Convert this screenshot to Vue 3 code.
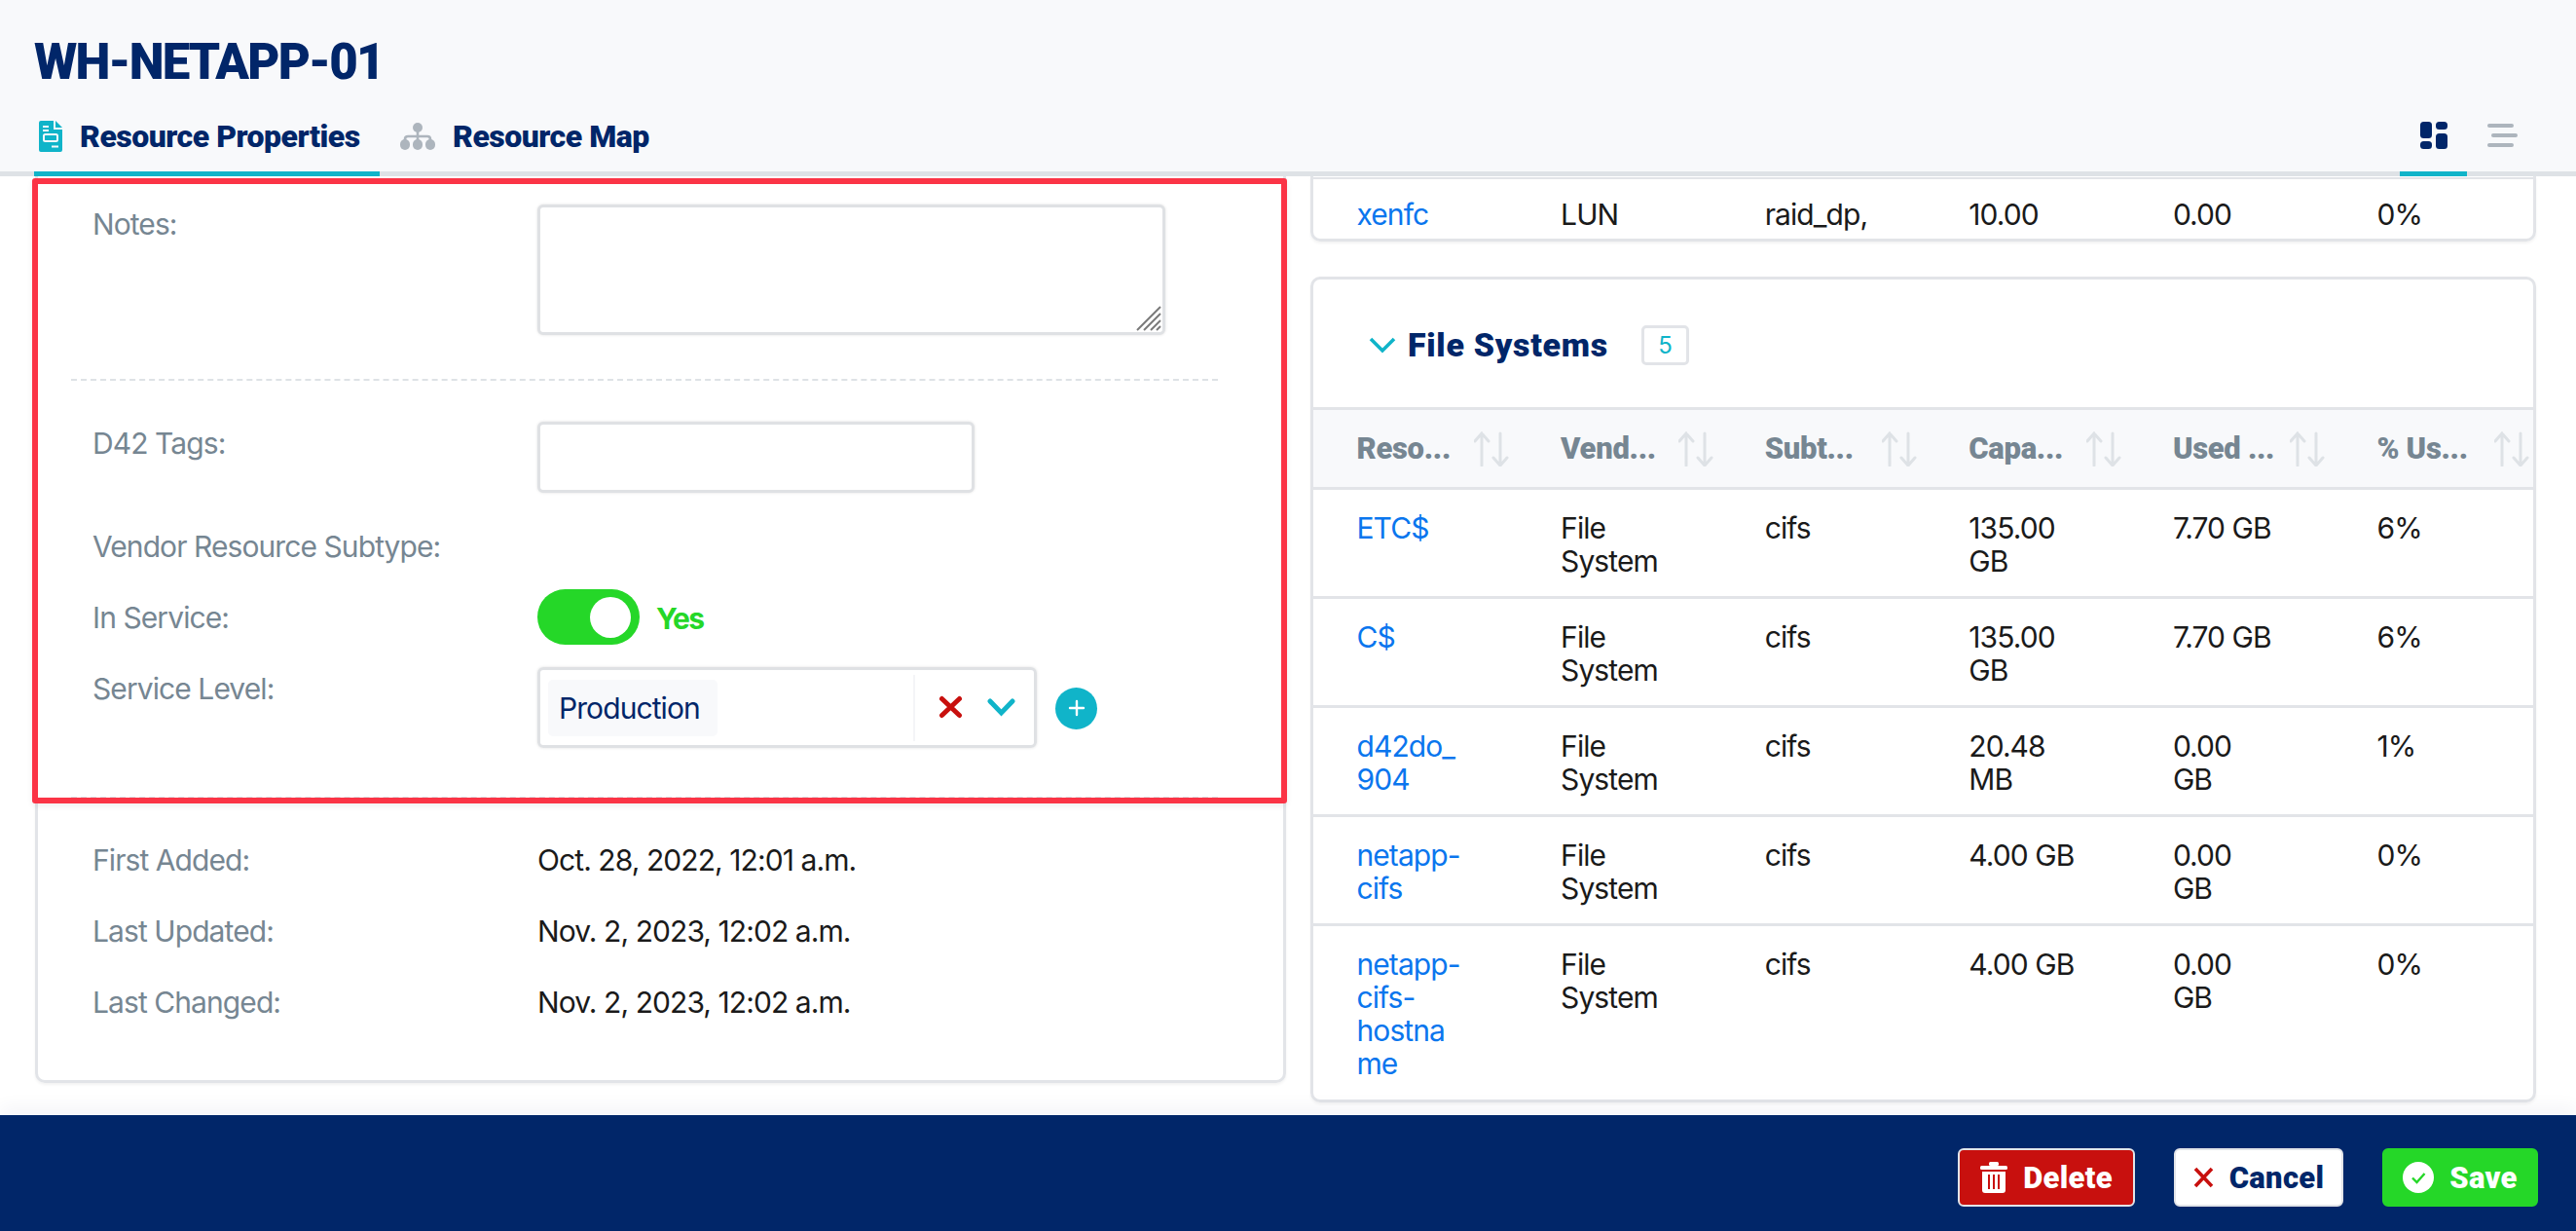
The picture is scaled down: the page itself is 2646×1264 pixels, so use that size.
<script setup>
const columnHeads = ['Reso...', 'Vend...', 'Subt...', 'Capa...', 'Used ...', '% Us...']
const rows = [
  { name: 'ETC$', vendor: 'File\nSystem', sub: 'cifs', cap: '135.00\nGB', used: '7.70 GB', pct: '6%' },
  { name: 'C$', vendor: 'File\nSystem', sub: 'cifs', cap: '135.00\nGB', used: '7.70 GB', pct: '6%' },
  { name: 'd42do_\n904', vendor: 'File\nSystem', sub: 'cifs', cap: '20.48\nMB', used: '0.00\nGB', pct: '1%' },
  { name: 'netapp-\ncifs', vendor: 'File\nSystem', sub: 'cifs', cap: '4.00 GB', used: '0.00\nGB', pct: '0%' },
  { name: 'netapp-\ncifs-\nhostna\nme', vendor: 'File\nSystem', sub: 'cifs', cap: '4.00 GB', used: '0.00\nGB', pct: '0%' }
]
const dates = [
  { label: 'First Added:', value: 'Oct. 28, 2022, 12:01 a.m.' },
  { label: 'Last Updated:', value: 'Nov. 2, 2023, 12:02 a.m.' },
  { label: 'Last Changed:', value: 'Nov. 2, 2023, 12:02 a.m.' }
]
</script>

<template>
  <div class="page">
    <header class="top">
      <h1 class="title">WH-NETAPP-01</h1>
      <nav class="tabs">
        <a class="tab active">
          <svg class="tab-icon doc" viewBox="0 0 24 32"><path d="M2 0h13v9h9v21a2 2 0 0 1-2 2H2a2 2 0 0 1-2-2V2a2 2 0 0 1 2-2z" fill="#10b4c9"/><path d="M17 0l7 7h-7z" fill="#10b4c9"/><path d="M4 6h6M4 10h6M13 26.500h7" stroke="#f8f9fb" stroke-width="2"/><rect x="5" y="14" width="14" height="7" rx="1.5" fill="none" stroke="#f8f9fb" stroke-width="2"/></svg>
          <span>Resource Properties</span>
        </a>
        <a class="tab">
          <svg class="tab-icon map" viewBox="0 0 36 28"><g fill="#adb5bd"><circle cx="18" cy="5" r="5"/><rect x="0" y="17" width="10" height="11" rx="5"/><rect x="13" y="17" width="10" height="11" rx="5"/><rect x="26" y="17" width="10" height="11" rx="5"/></g><path d="M18 9v9M5 18v-1q0-3 3-3h20q3 0 3 3v1" fill="none" stroke="#adb5bd" stroke-width="2.6"/></svg>
          <span>Resource Map</span>
        </a>
        <div class="views">
          <a class="view active">
            <svg width="28" height="28" viewBox="0 0 28 28" fill="#012669"><rect x="0" y="0" width="12" height="17" rx="3.5"/><rect x="0" y="20" width="12" height="8" rx="3.5"/><rect x="16" y="0" width="12" height="8" rx="3.5"/><rect x="16" y="12" width="12" height="16" rx="3.5"/></svg>
          </a>
          <a class="view">
            <svg width="31" height="24" viewBox="0 0 31 24" fill="#adb5bd"><rect x="0" y="0" width="27" height="4" rx="2"/><rect x="4" y="10" width="27" height="4" rx="2"/><rect x="0" y="20" width="27" height="4" rx="2"/></svg>
          </a>
        </div>
      </nav>
    </header>

    <main class="content">
      <section class="col-left">
        <div class="row row-notes">
          <label class="lbl lbl-notes">Notes:</label>
          <div class="notes-box">
            <textarea class="field notes"></textarea>
            <svg class="grip" width="26" height="26" viewBox="0 0 26 26" stroke="#7a7a7a" stroke-width="2"><path d="M25 1L1 25M25 8L8 25M25 15L15 25M25 21L21 25"/></svg>
          </div>
        </div>
        <hr class="dash first-dash" />
        <div class="row row-tags">
          <label class="lbl lbl-tags">D42 Tags:</label>
          <input class="field tags" />
        </div>
        <div class="row row-vendor">
          <label class="lbl">Vendor Resource Subtype:</label>
        </div>
        <div class="row row-service">
          <label class="lbl lbl-service">In Service:</label>
          <div class="toggle-wrap">
            <span class="toggle"><span class="thumb"></span></span>
            <span class="yes">Yes</span>
          </div>
        </div>
        <div class="row row-level">
          <label class="lbl lbl-level">Service Level:</label>
          <div class="level-wrap">
            <div class="select">
              <span class="chip">Production</span>
              <span class="select-tools">
                <svg width="25" height="24" viewBox="0 0 25 24"><path d="M3.5 3.5l18 17M21.5 3.5l-18 17" stroke="#c8100e" stroke-width="5" stroke-linecap="round"/></svg>
                <svg width="29" height="20" viewBox="0 0 29 20"><path d="M3 4l11.500 12L26 4" fill="none" stroke="#10b4c9" stroke-width="5" stroke-linecap="round"/></svg>
              </span>
            </div>
            <span class="plus">
              <svg width="18" height="18" viewBox="0 0 18 18"><path d="M9 2v14M2 9h14" stroke="#fff" stroke-width="2.4" stroke-linecap="round"/></svg>
            </span>
          </div>
        </div>
        <hr class="dash second-dash" />
        <div v-for="d in dates" :key="d.label" class="row row-date">
          <label class="lbl">{{ d.label }}</label>
          <span class="val">{{ d.value }}</span>
        </div>
      </section>

      <section class="col-right">
        <div class="card card-clipped">
          <div class="grid tr clipped">
            <a class="link">xenfc</a>
            <span>LUN</span>
            <span>raid_dp,</span>
            <span>{{ '10.00\nGB' }}</span>
            <span>{{ '0.00\nGB' }}</span>
            <span>0%</span>
          </div>
        </div>

        <div class="card card-fs">
          <div class="fs-head">
            <svg width="28" height="17" viewBox="0 0 28 17"><path d="M2 2l12 12L26 2" fill="none" stroke="#10b4c9" stroke-width="3.6"/></svg>
            <h2 class="fs-title">File Systems</h2>
            <span class="badge">5</span>
          </div>
          <div class="grid th">
            <div v-for="h in columnHeads" :key="h" class="th-cell">
              <span>{{ h }}</span>
              <svg class="sort" width="36" height="36" viewBox="0 0 36 36" fill="none" stroke="#dee2e6" stroke-width="3" stroke-linecap="round"><path d="M8 35V2M1 10l7-8 7 8M27 2v33M20 27l7 8 7-8"/></svg>
            </div>
          </div>
          <div v-for="r in rows" :key="r.name" class="grid tr">
            <a class="link">{{ r.name }}</a>
            <span>{{ r.vendor }}</span>
            <span>{{ r.sub }}</span>
            <span>{{ r.cap }}</span>
            <span>{{ r.used }}</span>
            <span>{{ r.pct }}</span>
          </div>
        </div>
      </section>
    </main>

    <footer class="bottom">
      <button class="btn del">
        <svg width="28" height="32" viewBox="0 0 28 32" fill="#fff"><rect x="0" y="4" width="28" height="4" rx="1.500"/><rect x="9" y="0" width="10" height="4" rx="1.500"/><path d="M2 10h24v19a3 3 0 0 1-3 3H5a3 3 0 0 1-3-3z"/><path d="M9 13v15M14 13v15M19 13v15" stroke="#c8100e" stroke-width="2"/></svg>
        <span>Delete</span>
      </button>
      <button class="btn cancel">
        <svg width="21" height="22" viewBox="0 0 21 22"><path d="M2 2l17 18M19 2L2 20" stroke="#c8100e" stroke-width="3.600"/></svg>
        <span>Cancel</span>
      </button>
      <button class="btn save">
        <svg width="32" height="32" viewBox="0 0 32 32"><circle cx="16" cy="16" r="16" fill="#fff"/><path d="M10 16.500l4.500 4.500 8-9" fill="none" stroke="#25d728" stroke-width="2.400"/></svg>
        <span>Save</span>
      </button>
    </footer>

    <div class="highlight"></div>
  </div>
</template>

<style>
html, body { margin: 0; overflow: hidden; background: #fff; }
</style>

<style scoped>
.page {
  position: relative;
  width: 2646px;
  height: 1264px;
  display: flex;
  flex-direction: column;
  overflow: hidden;
  font-family: Inter, "Noto Sans", sans-serif;
  font-size: 30px;
  line-height: 34px;
  letter-spacing: -0.92px;
  color: #1a1a1a;
}
.top {
  height: 181px;
  box-sizing: border-box;
  flex: none;
  background: #f8f9fb;
  border-bottom: 5px solid #dee2e6;
  padding: 0 35px;
  display: flex;
  flex-direction: column;
}
.title {
  margin: 34px 0 0;
  height: 59px;
  font-family: Roboto, sans-serif;
  font-weight: 900;
  font-size: 51px;
  line-height: 60px;
  letter-spacing: -1.8px;
  color: #012669;
}
.tabs {
  display: flex;
  height: 88px;
}
.tab {
  display: flex;
  align-items: center;
  height: 88px;
  padding-top: 6px;
  box-sizing: border-box;
  font-family: Roboto, sans-serif;
  font-weight: 900;
  font-size: 32px;
  letter-spacing: -0.5px;
  color: #012669;
}
.tab.active {
  width: 355px;
  border-bottom: 5px solid #10b4c9;
  padding-left: 5px;
  padding-top: 11px;
  margin-right: 21px;
}
.tab-icon.doc { width: 24px; height: 32px; margin-right: 18px; }
.tab-icon.map { width: 36px; height: 28px; margin-right: 18px; }
.views { margin-left: auto; display: flex; margin-right: 25px; }
.view {
  display: flex;
  align-items: center;
  justify-content: center;
  width: 69px;
  height: 88px;
  box-sizing: border-box;
  padding-top: 4px;
}
.view.active { border-bottom: 5px solid #10b4c9; margin-right: 21px; padding-top: 9px; }
.view:last-child { width: 31px; }

.content {
  flex: none;
  height: 964px;
  display: flex;
  padding-left: 36px;
  gap: 25px;
  align-items: flex-start;
}
.col-left {
  width: 1285px;
  height: 931px;
  box-sizing: border-box;
  border: 3px solid #e2e4e8;
  border-top: none;
  border-radius: 0 0 10px 10px;
  box-shadow: 0 2px 3px rgba(0, 0, 0, .05);
  padding: 29px 0 0 56px;
}
.row { display: grid; grid-template-columns: 457px 1fr; }
.lbl { color: #768692; }
.lbl-notes { margin-top: 3px; }
.notes-box { position: relative; width: 645px; height: 134px; }
.field {
  display: block;
  box-sizing: border-box;
  background: #fff;
  border: 3px solid #dfe1e4;
  border-radius: 6px;
  outline: none;
  padding: 0;
  box-shadow: 0 0 3px rgba(0, 0, 0, .12);
}
.notes { width: 645px; height: 134px; resize: none; }
.grip { position: absolute; right: 4px; bottom: 4px; }
.tags { width: 449px; height: 73px; }
.dash {
  margin: 0 0 0 -22px;
  width: 1178px;
  height: 0;
  border: none;
  border-top: 2px dashed #dee2e6;
}
.first-dash { margin-top: 45px; margin-bottom: 42px; }
.second-dash { margin-top: 50px; margin-bottom: 46px; }
.lbl-tags { margin-top: 5px; }
.row-vendor { margin-top: 38px; }
.row-service { margin-top: 27px; }
.lbl-service { margin-top: 12px; }
.row-level { margin-top: 23px; }
.lbl-level { margin-top: 5px; }
.row-date { margin-bottom: 39px; }
.toggle-wrap { display: flex; align-items: center; height: 57px; }
.toggle {
  display: flex;
  align-items: center;
  justify-content: flex-end;
  box-sizing: border-box;
  width: 105px;
  height: 57px;
  padding-right: 9px;
  border-radius: 29px;
  background: #25d728;
}
.thumb { width: 42px; height: 42px; border-radius: 50%; background: #fff; }
.yes { margin-left: 17px; margin-top: 3px; font-weight: 700; color: #25d728; letter-spacing: -1.6px; }
.level-wrap { display: flex; align-items: center; }
.select {
  box-sizing: border-box;
  display: flex;
  align-items: center;
  width: 513px;
  height: 83px;
  padding: 0 8px;
  border: 3px solid #dfe1e4;
  border-radius: 6px;
  box-shadow: 0 0 3px rgba(0, 0, 0, .12);
}
.chip {
  display: flex;
  align-items: center;
  box-sizing: border-box;
  width: 174px;
  height: 58px;
  padding-left: 11px;
  border-radius: 5px;
  background: #f8f9fb;
  color: #012669;
}
.select-tools {
  display: flex;
  align-items: center;
  gap: 25px;
  margin-left: auto;
  height: 68px;
  border-left: 2px solid #f4f5f7;
  padding: 0 11px 2px 24px;
  box-sizing: border-box;
}
.plus {
  display: flex;
  align-items: center;
  justify-content: center;
  width: 43px;
  height: 43px;
  margin-left: 19px;
  margin-top: 1px;
  border-radius: 50%;
  background: #10b4c9;
}

.col-right { width: 1259px; display: flex; flex-direction: column; }
.card {
  box-sizing: border-box;
  border: 3px solid #e2e4e8;
  border-radius: 10px;
  box-shadow: 0 2px 3px rgba(0, 0, 0, .05);
  overflow: hidden;
}
.card-clipped {
  height: 67px;
  border-top: none;
  border-radius: 0 0 10px 10px;
  margin-bottom: 36px;
}
.card-fs { height: 848px; }
.fs-head {
  height: 131px;
  box-sizing: border-box;
  display: flex;
  align-items: center;
  padding-left: 57px;
  padding-top: 3px;
}
.fs-title {
  margin: 0 34px 0 12px;
  font-family: Roboto, sans-serif;
  font-weight: 900;
  font-size: 34px;
  letter-spacing: 0.7px;
  color: #012669;
}
.badge {
  box-sizing: border-box;
  width: 49px;
  height: 41px;
  border: 3px solid #e2e4e8;
  border-radius: 5px;
  text-align: center;
  font-size: 24px;
  line-height: 35px;
  letter-spacing: 0;
  color: #10b4c9;
}
.grid {
  display: grid;
  grid-template-columns: repeat(6, 209.6px);
  padding-left: 44.5px;
}
.th {
  height: 85px;
  box-sizing: border-box;
  align-items: center;
  background: #f8f9fb;
  border-top: 3px solid #e2e4e8;
  border-bottom: 3px solid #e2e4e8;
}
.th-cell {
  display: flex;
  align-items: center;
  justify-content: space-between;
  padding-right: 53px;
  font-family: Roboto, sans-serif;
  font-weight: 900;
  font-size: 31px;
  letter-spacing: -0.3px;
  color: #768692;
}
.tr {
  padding-top: 22px;
  padding-bottom: 19px;
  min-height: 112px;
  box-sizing: border-box;
  border-bottom: 3px solid #e2e4e8;
}
.tr:last-child { border-bottom: none; }
.tr > * { white-space: pre-line; }
.tr.clipped { margin-top: 1px; padding-top: 18px; line-height: 36px; border-top: 2px solid #e2e4e8; }
.link { color: #0a76ee; }

.bottom {
  flex: none;
  height: 119px;
  box-sizing: border-box;
  display: flex;
  align-items: center;
  justify-content: flex-end;
  gap: 40px;
  padding: 9px 39px 0 0;
  background: #012669;
  box-shadow: 0 -10px 16px rgba(1, 38, 105, .04);
  position: relative;
}
.btn {
  display: flex;
  align-items: center;
  justify-content: center;
  gap: 16px;
  height: 60px;
  box-sizing: border-box;
  padding: 0;
  border: 2px solid #e2e4e8;
  border-radius: 6px;
  font-family: Roboto, sans-serif;
  font-weight: 900;
  font-size: 31px;
  letter-spacing: 0.3px;
}
.del { width: 182px; background: #c8100e; color: #fff; }
.cancel { width: 174px; background: #fff; color: #012669; }
.save { width: 160px; background: #25d728; border-color: #25d728; color: #fff; }

.highlight {
  position: absolute;
  left: 33px;
  top: 183px;
  width: 1289px;
  height: 642px;
  box-sizing: border-box;
  border: 6px solid #fb3446;
  border-radius: 3px;
  box-shadow: 0 3px 6px rgba(0, 0, 0, .06);
  pointer-events: none;
}
</style>
